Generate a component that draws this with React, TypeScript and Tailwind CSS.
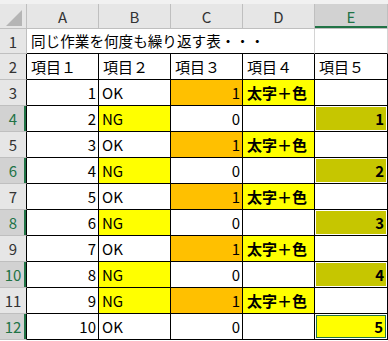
import React from "react";

type Row = {
  n: number;
  a: number;
  b: "OK" | "NG";
  c: 0 | 1;
  d: boolean;
  e?: number;
  active?: boolean;
};

const rows: Row[] = [
  { n: 3, a: 1, b: "OK", c: 1, d: true },
  { n: 4, a: 2, b: "NG", c: 0, d: false, e: 1 },
  { n: 5, a: 3, b: "OK", c: 1, d: true },
  { n: 6, a: 4, b: "NG", c: 0, d: false, e: 2 },
  { n: 7, a: 5, b: "OK", c: 1, d: true },
  { n: 8, a: 6, b: "NG", c: 0, d: false, e: 3 },
  { n: 9, a: 7, b: "OK", c: 1, d: true },
  { n: 10, a: 8, b: "NG", c: 0, d: false, e: 4 },
  { n: 11, a: 9, b: "NG", c: 1, d: true },
  { n: 12, a: 10, b: "OK", c: 0, d: false, e: 5, active: true },
];

const cols = ["A", "B", "C", "D", "E"];

function RowHead({ n, selected, dark }: { n: number; selected?: boolean; dark?: boolean }) {
  return (
    <div
      className={
        "flex items-center justify-center border-b border-r border-b-[#bfbfbf] text-[15px] " +
        (dark ? "border-r-black " : "border-r-[#bfbfbf] ") +
        (selected
          ? "bg-[#d2d2d2] text-[#217346] shadow-[inset_-2px_0_0_#217346]"
          : "bg-[#e6e6e6] text-[#333]")
      }
    >
      {n}
    </div>
  );
}

function Cell({ className = "", children }: { className?: string; children?: React.ReactNode }) {
  return (
    <div className={"flex items-center border-b border-r border-black text-[15px] text-black " + className}>
      {children}
    </div>
  );
}

export default function App() {
  return (
    <div className="h-[341px] w-[388px] overflow-hidden bg-white font-['Noto_Sans_CJK_JP',sans-serif] leading-none">
      <div className="h-[4px] bg-[#f1f1f1]" />
      <div className="grid grid-cols-[27px_72px_72px_72px_72px_73px] grid-rows-[25px_25px_26px_26px_26px_26px_26px_26px_26px_26px_26px_26px_26px]">
        {/* column headers */}
        <div className="relative border-b border-r border-[#bfbfbf] bg-[#e6e6e6]">
          <svg className="absolute left-[6px] top-[6px]" width="16" height="16" viewBox="0 0 16 16">
            <polygon points="16,0 16,16 0,16" fill="#b5b5b5" />
          </svg>
        </div>
        {cols.map((c) => (
          <div
            key={c}
            className={
              "flex items-center justify-center border-b border-r border-[#bfbfbf] text-[15px] " +
              (c === "E"
                ? "bg-[#d2d2d2] text-[#217346] shadow-[inset_0_-2px_0_#217346]"
                : "bg-[#e6e6e6] text-[#333]")
            }
          >
            {c}
          </div>
        ))}

        {/* row 1 */}
        <RowHead n={1} />
        <div className="col-span-4 flex items-center whitespace-nowrap border-b border-r border-b-black border-r-[#d4d4d4] pl-[4px] text-[14.6px] text-black">
          同じ作業を何度も繰り返す表・・・
        </div>
        <div className="border-b border-r border-b-black border-r-[#d4d4d4]" />

        {/* row 2 */}
        <RowHead n={2} dark />
        {["項目１", "項目２", "項目３", "項目４", "項目５"].map((h) => (
          <Cell key={h} className="pl-[4px]">
            {h}
          </Cell>
        ))}

        {rows.map((r) => (
          <React.Fragment key={r.n}>
            <RowHead n={r.n} dark selected={r.e !== undefined} />
            <Cell className="justify-end pr-[2px]">{r.a}</Cell>
            <Cell className={"pl-[3px] " + (r.b === "NG" ? "bg-[#ffff00]" : "")}>{r.b}</Cell>
            <Cell className={"justify-end pr-[2px] " + (r.c === 1 ? "bg-[#ffc000]" : "")}>{r.c}</Cell>
            <Cell className={"pl-[4px] font-bold " + (r.d ? "bg-[#ffff00]" : "")}>{r.d ? "太字＋色" : ""}</Cell>
            <Cell className="items-stretch">
              {r.e !== undefined && (
                <div
                  className={
                    "m-[1px] flex flex-1 items-center justify-end pr-[2px] font-bold " +
                    (r.active ? "border border-[#217346] bg-[#ffff00]" : "bg-[#c6c600]")
                  }
                >
                  {r.e}
                </div>
              )}
            </Cell>
          </React.Fragment>
        ))}
      </div>
    </div>
  );
}
